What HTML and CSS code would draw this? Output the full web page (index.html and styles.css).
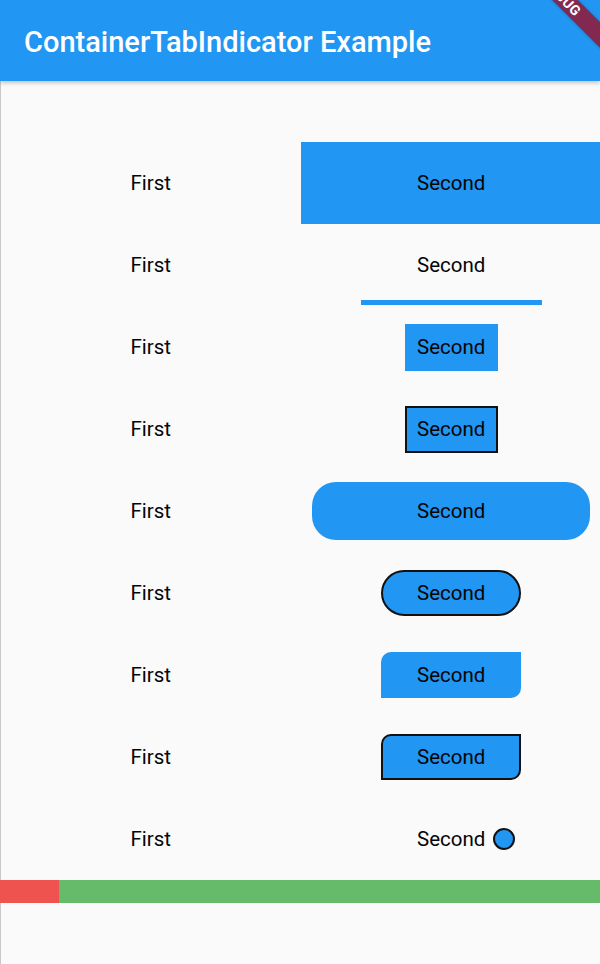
FILE: index.html
```html
<!DOCTYPE html>
<html>
<head>
<meta charset="utf-8">
<link rel="stylesheet" href="styles.css">
</head>
<body>
<div class="app">
  <header class="appbar"><h1 class="title">ContainerTabIndicator Example</h1></header>
  <main class="content">
    <div class="tabs"><div class="tab">First</div><div class="tab full"><span class="ind i1">Second</span></div></div>
    <div class="tabs"><div class="tab">First</div><div class="tab sec under"><span class="ind">Second</span></div></div>
    <div class="tabs"><div class="tab">First</div><div class="tab sec"><span class="ind i3">Second</span></div></div>
    <div class="tabs"><div class="tab">First</div><div class="tab sec"><span class="ind i3 bd">Second</span></div></div>
    <div class="tabs"><div class="tab">First</div><div class="tab sec"><span class="ind i5">Second</span></div></div>
    <div class="tabs"><div class="tab">First</div><div class="tab sec"><span class="ind i6 bd">Second</span></div></div>
    <div class="tabs"><div class="tab">First</div><div class="tab sec"><span class="ind i7">Second</span></div></div>
    <div class="tabs"><div class="tab">First</div><div class="tab sec"><span class="ind i7 bd">Second</span></div></div>
    <div class="tabs"><div class="tab">First</div><div class="tab sec dot"><span class="ind">Second</span></div></div>
    <div class="bar"><div class="bar-red"></div><div class="bar-green"></div></div>
  </main>
  <div class="banner-clip"><div class="banner">DEBUG</div></div>
</div>
</body>
</html>
```
FILE: styles.css
```css
html, body {
  margin: 0;
  padding: 0;
  background: #fafafa;
  overflow: hidden;
}
body {
  font-family: Roboto, "Noto Sans", sans-serif;
  width: 600px;
  height: 964px;
}
.app {
  position: relative;
  width: 600px;
  height: 964px;
  display: flex;
  flex-direction: column;
}
.appbar {
  height: 81px;
  background: #2196f3;
  display: flex;
  align-items: center;
  padding-left: 24px;
  box-shadow: 0 2px 4px rgba(0,0,0,0.22);
  position: relative;
  z-index: 2;
  flex: none;
}
.title {
  margin: 0;
  color: #fff;
  font-size: 29px;
  font-weight: 500;
  letter-spacing: 0;
  padding-top: 3px;
}
.content {
  flex: 1;
  border-left: 1px solid #c8c8c8;
  padding-top: 61px;
  display: flex;
  flex-direction: column;
}
.tabs {
  height: 82px;
  display: grid;
  grid-template-columns: 1fr 1fr;
}
.tab {
  display: flex;
  align-items: center;
  justify-content: center;
  font-size: 20.5px;
  color: #050505;
  position: relative;
}
.sec {
  padding-left: 2px;
}
.ind {
  display: flex;
  align-items: center;
  justify-content: center;
  box-sizing: border-box;
  line-height: 1;
}
.i1 {
  width: 100%;
  height: 100%;
  padding-left: 2px;
  background: #2196f3;
}
.under::after {
  content: "";
  position: absolute;
  bottom: 1px;
  left: 50%;
  width: 181px;
  margin-left: -89px;
  height: 5px;
  background: #2196f3;
}
.i3 {
  width: 93px;
  height: 47px;
  background: #2196f3;
}
.bd {
  border: 2px solid #111;
}
.i5 {
  width: 278px;
  height: 58px;
  border-radius: 24px;
  background: #2196f3;
}
.i6 {
  width: 140px;
  height: 46px;
  border-radius: 23px;
  background: #2196f3;
}
.i7 {
  width: 140px;
  height: 46px;
  border-radius: 10px 0 10px 0;
  background: #2196f3;
}
.dot::after {
  content: "";
  position: absolute;
  left: 50%;
  top: 50%;
  margin-left: 43px;
  margin-top: -11px;
  width: 22px;
  height: 22px;
  box-sizing: border-box;
  border: 2px solid #111;
  border-radius: 50%;
  background: #2196f3;
}
.bar {
  height: 23px;
  display: flex;
  margin-left: -1px;
}
.bar-red {
  width: 59px;
  background: #ef5350;
}
.bar-green {
  flex: 1;
  background: #66bb6a;
}
.banner-clip {
  position: absolute;
  top: 0;
  right: 0;
  width: 80px;
  height: 80px;
  overflow: hidden;
  z-index: 5;
  pointer-events: none;
}
.banner {
  position: absolute;
  width: 160px;
  height: 18px;
  left: -38px;
  top: -12px;
  transform: rotate(45deg);
  background: #83294f;
  color: #fff;
  font-family: Roboto, sans-serif;
  font-weight: 700;
  font-size: 14px;
  letter-spacing: 0.5px;
  line-height: 18px;
  text-align: center;
  box-shadow: 0 0 3px rgba(0,0,0,0.3);
}
```
